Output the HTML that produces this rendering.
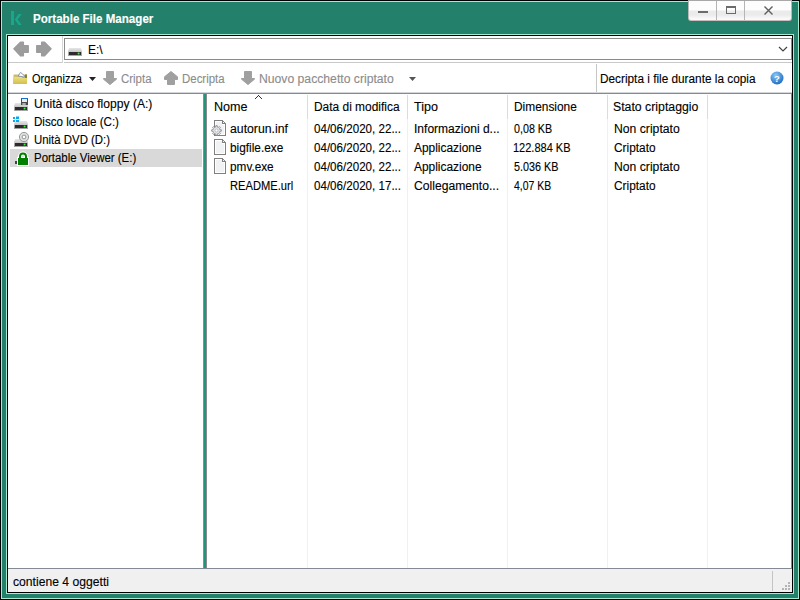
<!DOCTYPE html>
<html><head><meta charset="utf-8">
<style>
*{margin:0;padding:0;box-sizing:border-box}
html,body{width:800px;height:600px;overflow:hidden;background:#000}
body{position:relative;font-family:"Liberation Sans",sans-serif;font-size:12px;color:#000}
.a{position:absolute}
.t{position:absolute;transform-origin:0 0;white-space:pre;line-height:14px;font-size:12px;-webkit-text-stroke:0.12px currentColor}
.g{color:#8c8c8c}
</style></head><body>

<svg width="0" height="0" style="position:absolute">
<defs>
<linearGradient id="dtop" x1="0" y1="0" x2="0" y2="1"><stop offset="0" stop-color="#e6e6e6"/><stop offset="1" stop-color="#c2c2c2"/></linearGradient>


</defs></svg>
<!-- outer frame -->
<div class="a" style="left:1px;top:1px;width:798px;height:598px;background:#a5ead3"></div>
<div class="a" style="left:2px;top:2px;width:796px;height:596px;background:#23806b"></div>
<!-- K logo -->
<svg class="a" style="left:8px;top:8px" width="18" height="20" viewBox="0 0 18 20">
<rect x="3" y="3" width="3" height="14" fill="#17a88b"/>
<path d="M10.5 6H13.8L9.6 11.4L13.8 17H10.5L6.8 11.4Z" fill="#17a88b"/>
</svg>
<div class="t" style="left:33px;top:12px;color:#fff;font-weight:bold;font-size:12px;transform:scaleX(0.965)">Portable File Manager</div>
<!-- caption buttons -->
<div class="a" style="left:688px;top:0;width:104px;height:21px;background:linear-gradient(#fdfdfd 0,#fdfdfd 9px,#ebebeb 10px,#ebebeb 14px,#fafafa 18px);border:1px solid #b8b8b8;border-top-color:#a8a8a8;border-bottom-color:#c9bebe;border-radius:0 0 3px 3px"></div>
<div class="a" style="left:716px;top:1px;width:1px;height:19px;background:#b5b5b5"></div>
<div class="a" style="left:744px;top:1px;width:1px;height:19px;background:#b5b5b5"></div>
<div class="a" style="left:698px;top:11px;width:10px;height:2px;background:#6b6b6b"></div>
<div class="a" style="left:726px;top:6px;width:10px;height:8px;border:1px solid #6b6b6b;border-top-width:2px"></div>
<svg class="a" style="left:763px;top:6px" width="11" height="9" viewBox="0 0 11 9"><path d="M1.5 0.5L9.5 8.5M9.5 0.5L1.5 8.5" stroke="#5e5e5e" stroke-width="1.4"/></svg>

<!-- inner window -->
<div class="a" style="left:6px;top:34px;width:788px;height:560px;background:#a5ead3"></div>
<div class="a" style="left:7px;top:35px;width:786px;height:558px;background:#000"></div>
<div class="a" style="left:8px;top:36px;width:784px;height:556px;background:#fff"></div>

<!-- nav arrows -->
<svg class="a" style="left:13px;top:41px" width="40" height="16" viewBox="0 0 40 16">
<path d="M1 7.8L7.5 1.2H10.3V4.7H15.2V11.3H10.3V14.8H7.5Z" fill="#9c9c9c" stroke="#9c9c9c" stroke-width="1.5" stroke-linejoin="round"/>
<path d="M38 7.8L31.5 1.2H28.7V4.7H23.8V11.3H28.7V14.8H31.5Z" fill="#9c9c9c" stroke="#9c9c9c" stroke-width="1.5" stroke-linejoin="round"/>
</svg>
<div class="a" style="left:8px;top:62px;width:54px;height:1px;background:#c8c8c8"></div>
<div class="a" style="left:62px;top:36px;width:1px;height:27px;background:#d6d6d6"></div>
<!-- address box -->
<div class="a" style="left:64px;top:38px;width:728px;height:22px;border:1px solid #8a8a8a"></div>
<div class="a" style="left:64px;top:62px;width:728px;height:1px;background:#c8c8c8"></div>
<svg class="a" style="left:68px;top:48px" width="14" height="8" viewBox="0 0 14 8"><g>
<path d="M1.2 0H12.8L14 3V4.5H0V3Z" fill="url(#dtop)"/>
<rect x="0" y="4" width="14" height="4" rx="0.5" fill="#a4a4a4"/>
<rect x="1" y="4" width="12" height="3" fill="#2c2c2c"/>
<rect x="9.7" y="4.6" width="1.8" height="1.8" fill="#40f040"/>
</g></svg>
<div class="t" style="left:88px;top:43px;transform:scaleX(1.0000)">E:\</div>
<svg class="a" style="left:778px;top:46px" width="10" height="7" viewBox="0 0 10 7"><path d="M1 1L5 5L9 1" stroke="#444" stroke-width="1.2" fill="none"/></svg>

<!-- toolbar -->
<svg class="a" style="left:13px;top:71px" width="15" height="14" viewBox="0 0 15 14">
<defs><linearGradient id="fy" x1="0" y1="0" x2="0" y2="1"><stop offset="0" stop-color="#ece07a"/><stop offset="1" stop-color="#d2be4e"/></linearGradient></defs>
<path d="M0.5 3.5H14V9H0.5Z" fill="#cbbd70"/>
<path d="M12 3.5H14V7H12Z" fill="#8d7e2a"/>
<path d="M5.2 5L7.5 1.3L12 5.3L11 6Z" fill="#fff" stroke="#7e8fae" stroke-width="0.9"/>
<path d="M0 6H8.5L9.5 7H14V12.3Q14 13 13.3 13H0.7Q0 13 0 12.3Z" fill="url(#fy)"/>
</svg>
<div class="t" style="left:32px;top:72px;transform:scaleX(0.9136)">Organizza</div>
<svg class="a" style="left:89px;top:77px" width="7" height="4" viewBox="0 0 7 4"><path d="M0 0H7L3.5 4Z" fill="#222"/></svg>

<svg class="a" style="left:103px;top:71px" width="14" height="14" viewBox="0 0 14 14"><path d="M3.5 0.5H10.5V7.5H13.5V8.2L7 13.6L0.5 8.2V7.5H3.5Z" fill="#a0a0a0" stroke="#a0a0a0" stroke-linejoin="round"/></svg>
<div class="t g" style="left:121px;top:72px;transform:scaleX(0.9536)">Cripta</div>
<svg class="a" style="left:164px;top:71px" width="14" height="14" viewBox="0 0 14 14"><path d="M7 0.5L13.5 5.8V8.5H10.5V13.5H3.5V8.5H0.5V5.8Z" fill="#a0a0a0" stroke="#a0a0a0" stroke-linejoin="round"/></svg>
<div class="t g" style="left:182px;top:72px;transform:scaleX(0.9545)">Decripta</div>
<svg class="a" style="left:241px;top:71px" width="14" height="14" viewBox="0 0 14 14"><path d="M3.5 0.5H10.5V7.5H13.5V8.2L7 13.6L0.5 8.2V7.5H3.5Z" fill="#a0a0a0" stroke="#a0a0a0" stroke-linejoin="round"/></svg>
<div class="t g" style="left:259px;top:72px;transform:scaleX(1.0152)">Nuovo pacchetto criptato</div>
<svg class="a" style="left:409px;top:77px" width="7" height="4" viewBox="0 0 7 4"><path d="M0 0H7L3.5 4Z" fill="#555"/></svg>

<div class="a" style="left:596px;top:64px;width:1px;height:29px;background:#c6c6c6"></div>
<div class="t" style="left:600px;top:72px;transform:scaleX(0.9835)">Decripta i file durante la copia</div>
<svg class="a" style="left:770px;top:70.5px" width="14" height="14" viewBox="0 0 14 14">
<defs><radialGradient id="hg" cx="0.4" cy="0.3" r="0.7"><stop offset="0" stop-color="#8cc8f4"/><stop offset="1" stop-color="#1f6fc6"/></radialGradient></defs>
<circle cx="7" cy="7" r="6.5" fill="url(#hg)"/>
<text x="7" y="10.6" font-family="Liberation Sans" font-size="9.5" font-weight="bold" fill="#fff" text-anchor="middle">?</text>
</svg>
<div class="a" style="left:8px;top:92px;width:784px;height:1px;background:#d4d7dc"></div>
<div class="a" style="left:8px;top:93px;width:784px;height:1px;background:#838a94"></div>

<!-- tree panel -->
<div class="a" style="left:203px;top:94px;width:1px;height:474px;background:#8a8a92"></div>
<div class="a" style="left:204px;top:94px;width:2px;height:474px;background:#20967a"></div>
<div class="a" style="left:206px;top:94px;width:1px;height:474px;background:#8a8a92"></div>
<div class="a" style="left:10px;top:149px;width:192px;height:18px;background:#d9d9d9"></div>


<svg class="a" style="left:14px;top:103px" width="14" height="8" viewBox="0 0 14 8"><g>
<path d="M1.2 0H12.8L14 3V4.5H0V3Z" fill="url(#dtop)"/>
<rect x="0" y="4" width="14" height="4" rx="0.5" fill="#a4a4a4"/>
<rect x="1" y="4" width="12" height="3" fill="#2c2c2c"/>
<rect x="9.7" y="4.6" width="1.8" height="1.8" fill="#40f040"/>
</g></svg>
<svg class="a" style="left:21px;top:98px" width="7" height="7" viewBox="0 0 7 7">
<rect x="0" y="0" width="7" height="7" fill="#4a4a4a"/><rect x="0" y="0" width="7" height="1" fill="#1a6fd0"/>
<rect x="1" y="1" width="5" height="3" fill="#ececec"/><rect x="1.5" y="5" width="3" height="2" fill="#d8d8d8"/><rect x="2.5" y="5.5" width="1" height="1" fill="#333"/>
</svg>
<svg class="a" style="left:14px;top:121px" width="14" height="8" viewBox="0 0 14 8"><g>
<path d="M1.2 0H12.8L14 3V4.5H0V3Z" fill="url(#dtop)"/>
<rect x="0" y="4" width="14" height="4" rx="0.5" fill="#a4a4a4"/>
<rect x="1" y="4" width="12" height="3" fill="#2c2c2c"/>
<rect x="9.7" y="4.6" width="1.8" height="1.8" fill="#40f040"/>
</g></svg>
<svg class="a" style="left:13px;top:116px" width="6" height="6" viewBox="0 0 6 6">
<rect x="0" y="1" width="2" height="2" fill="#08a8ee"/><rect x="3" y="0.5" width="3" height="2.5" fill="#08a8ee"/>
<rect x="0" y="4" width="2" height="2" fill="#08a8ee"/><rect x="3" y="4" width="3" height="2.5" fill="#08a8ee"/>
</svg>
<svg class="a" style="left:14px;top:139px" width="14" height="8" viewBox="0 0 14 8"><g>
<path d="M1.2 0H12.8L14 3V4.5H0V3Z" fill="url(#dtop)"/>
<rect x="0" y="4" width="14" height="4" rx="0.5" fill="#a4a4a4"/>
<rect x="1" y="4" width="12" height="3" fill="#2c2c2c"/>
<rect x="9.7" y="4.6" width="1.8" height="1.8" fill="#40f040"/>
</g></svg>
<svg class="a" style="left:18px;top:131px" width="12" height="12" viewBox="0 0 12 12">
<circle cx="6" cy="6" r="4.6" fill="#dde1e1" stroke="#8e8e8e" stroke-width="0.9"/>
<circle cx="6" cy="6" r="1.9" fill="#fff" stroke="#8a8a8a" stroke-width="0.9"/>
</svg>
<svg class="a" style="left:14px;top:151px" width="16" height="15" viewBox="0 0 16 15">
<rect x="1" y="10" width="2" height="3" fill="#444"/>
<path d="M6 8V5.5A3 3 0 0 1 12 5.5V8" stroke="#fff" stroke-width="4" fill="none"/>
<rect x="3" y="6" width="12" height="9" fill="#fff"/>
<path d="M6 8V5.5A3 3 0 0 1 12 5.5V8" stroke="#008000" stroke-width="2" fill="none"/>
<rect x="4" y="7" width="10" height="7" fill="#008000"/>
</svg>
<div class="t" style="left:34px;top:97px;transform:scaleX(1.0086)">Unità disco floppy (A:)</div>
<div class="t" style="left:34px;top:115px;transform:scaleX(0.9655)">Disco locale (C:)</div>
<div class="t" style="left:34px;top:133px;transform:scaleX(0.9506)">Unità DVD (D:)</div>
<div class="t" style="left:34px;top:151px;transform:scaleX(0.9538)">Portable Viewer (E:)</div>

<!-- list header -->
<div class="t" style="left:214px;top:100px;transform:scaleX(1.0484)">Nome</div>
<div class="t" style="left:314px;top:100px;transform:scaleX(0.9942)">Data di modifica</div>
<div class="t" style="left:414px;top:100px;transform:scaleX(1.0435)">Tipo</div>
<div class="t" style="left:514px;top:100px;transform:scaleX(0.9921)">Dimensione</div>
<div class="t" style="left:613px;top:100px;transform:scaleX(1.0244)">Stato criptaggio</div>
<svg class="a" style="left:255px;top:95px" width="7" height="4" viewBox="0 0 7 4" shape-rendering="crispEdges">
<rect x="3" y="0" width="1" height="1" fill="#333"/><rect x="2" y="1" width="1" height="1" fill="#333"/><rect x="4" y="1" width="1" height="1" fill="#333"/>
<rect x="1" y="2" width="1" height="1" fill="#333"/><rect x="5" y="2" width="1" height="1" fill="#333"/><rect x="0" y="3" width="1" height="1" fill="#333"/><rect x="6" y="3" width="1" height="1" fill="#333"/></svg>

<div class="a" style="left:307px;top:95px;width:1px;height:24px;background:#dcdcdc"></div>
<div class="a" style="left:407px;top:95px;width:1px;height:24px;background:#dcdcdc"></div>
<div class="a" style="left:507px;top:95px;width:1px;height:24px;background:#dcdcdc"></div>
<div class="a" style="left:607px;top:95px;width:1px;height:24px;background:#dcdcdc"></div>
<div class="a" style="left:707px;top:95px;width:1px;height:24px;background:#dcdcdc"></div>
<div class="a" style="left:307px;top:119px;width:1px;height:449px;background:#e9f1fe"></div>
<div class="a" style="left:407px;top:119px;width:1px;height:449px;background:#e9f1fe"></div>
<div class="a" style="left:507px;top:119px;width:1px;height:449px;background:#e9f1fe"></div>
<div class="a" style="left:607px;top:119px;width:1px;height:449px;background:#e9f1fe"></div>
<div class="a" style="left:707px;top:119px;width:1px;height:449px;background:#e9f1fe"></div>
<div class="a" style="left:791px;top:93px;width:1px;height:475px;background:#838a94"></div>

<!-- rows -->
<svg class="a" style="left:214px;top:120px" width="12" height="16" viewBox="0 0 12 16"><g>
<path d="M0 0H9V1H1V15H11V4H12V16H0Z" fill="#808080"/>
<rect x="1" y="1" width="8" height="14" fill="#fff"/><rect x="9" y="4" width="2" height="11" fill="#fff"/>
<rect x="2" y="2" width="6" height="12" fill="#f1f2f4"/>
<rect x="2" y="5" width="8" height="9" fill="#f1f2f4"/>
<path d="M8 0H9V3H11V4H8Z" fill="#808080"/>
<rect x="9" y="1" width="1" height="1" fill="#8a8a8a"/><rect x="10" y="2" width="1" height="1" fill="#8a8a8a"/><rect x="11" y="3" width="1" height="1" fill="#8a8a8a"/>
<rect x="9" y="2" width="1" height="1" fill="#f4f4f4"/>
</g></svg>
<svg class="a" style="left:211px;top:125px" width="12" height="12" viewBox="0 0 12 12">
<path d="M10.35 4.81 L10.35 6.19 L8.89 6.37 L8.51 7.28 L9.42 8.44 L8.44 9.42 L7.28 8.51 L6.37 8.89 L6.19 10.35 L4.81 10.35 L4.63 8.89 L3.72 8.51 L2.56 9.42 L1.58 8.44 L2.49 7.28 L2.11 6.37 L0.65 6.19 L0.65 4.81 L2.11 4.63 L2.49 3.72 L1.58 2.56 L2.56 1.58 L3.72 2.49 L4.63 2.11 L4.81 0.65 L6.19 0.65 L6.37 2.11 L7.28 2.49 L8.44 1.58 L9.42 2.56 L8.51 3.72 L8.89 4.63Z" fill="#e2e5e9" stroke="#8c8c8c" stroke-width="0.9" stroke-linejoin="round"/>
<circle cx="5.5" cy="5.5" r="1.5" fill="#fff" stroke="#a0a0a0" stroke-width="0.6"/>
</svg>
<svg class="a" style="left:214px;top:139px" width="12" height="16" viewBox="0 0 12 16"><g>
<path d="M0 0H9V1H1V15H11V4H12V16H0Z" fill="#808080"/>
<rect x="1" y="1" width="8" height="14" fill="#fff"/><rect x="9" y="4" width="2" height="11" fill="#fff"/>
<rect x="2" y="2" width="6" height="12" fill="#f1f2f4"/>
<rect x="2" y="5" width="8" height="9" fill="#f1f2f4"/>
<path d="M8 0H9V3H11V4H8Z" fill="#808080"/>
<rect x="9" y="1" width="1" height="1" fill="#8a8a8a"/><rect x="10" y="2" width="1" height="1" fill="#8a8a8a"/><rect x="11" y="3" width="1" height="1" fill="#8a8a8a"/>
<rect x="9" y="2" width="1" height="1" fill="#f4f4f4"/>
</g></svg>
<svg class="a" style="left:214px;top:158px" width="12" height="16" viewBox="0 0 12 16"><g>
<path d="M0 0H9V1H1V15H11V4H12V16H0Z" fill="#808080"/>
<rect x="1" y="1" width="8" height="14" fill="#fff"/><rect x="9" y="4" width="2" height="11" fill="#fff"/>
<rect x="2" y="2" width="6" height="12" fill="#f1f2f4"/>
<rect x="2" y="5" width="8" height="9" fill="#f1f2f4"/>
<path d="M8 0H9V3H11V4H8Z" fill="#808080"/>
<rect x="9" y="1" width="1" height="1" fill="#8a8a8a"/><rect x="10" y="2" width="1" height="1" fill="#8a8a8a"/><rect x="11" y="3" width="1" height="1" fill="#8a8a8a"/>
<rect x="9" y="2" width="1" height="1" fill="#f4f4f4"/>
</g></svg>

<div class="t" style="left:230px;top:122px;transform:scaleX(1.0211)">autorun.inf</div>
<div class="t" style="left:314px;top:122px;transform:scaleX(0.9663)">04/06/2020, 22...</div>
<div class="t" style="left:414px;top:122px;transform:scaleX(1.003)">Informazioni d...</div>
<div class="t" style="left:514px;top:122px;transform:scaleX(0.8929)">0,08 KB</div>
<div class="t" style="left:614px;top:122px;transform:scaleX(1.0156)">Non criptato</div>

<div class="t" style="left:230px;top:141px;transform:scaleX(0.9849)">bigfile.exe</div>
<div class="t" style="left:314px;top:141px;transform:scaleX(0.9663)">04/06/2020, 22...</div>
<div class="t" style="left:414px;top:141px;transform:scaleX(0.9926)">Applicazione</div>
<div class="t" style="left:513px;top:141px;transform:scaleX(0.9177)">122.884 KB</div>
<div class="t" style="left:614px;top:141px;transform:scaleX(0.9881)">Criptato</div>

<div class="t" style="left:230px;top:160px;transform:scaleX(0.9824)">pmv.exe</div>
<div class="t" style="left:314px;top:160px;transform:scaleX(0.9663)">04/06/2020, 22...</div>
<div class="t" style="left:414px;top:160px;transform:scaleX(0.9926)">Applicazione</div>
<div class="t" style="left:514px;top:160px;transform:scaleX(0.8980)">5.036 KB</div>
<div class="t" style="left:614px;top:160px;transform:scaleX(1.0156)">Non criptato</div>

<div class="t" style="left:230px;top:179px;transform:scaleX(0.9284)">README.url</div>
<div class="t" style="left:314px;top:179px;transform:scaleX(0.9663)">04/06/2020, 17...</div>
<div class="t" style="left:414px;top:179px;transform:scaleX(1.0120)">Collegamento...</div>
<div class="t" style="left:514px;top:179px;transform:scaleX(0.869)">4,07 KB</div>
<div class="t" style="left:614px;top:179px;transform:scaleX(0.9881)">Criptato</div>

<!-- status bar -->
<div class="a" style="left:8px;top:568px;width:784px;height:1px;background:#838a94"></div>
<div class="a" style="left:8px;top:569px;width:784px;height:23px;background:#f0f0f0"></div>
<div class="a" style="left:772px;top:571px;width:1px;height:20px;background:#c4c4c4"></div>
<div class="t" style="left:13px;top:575px;transform:scaleX(1.0128)">contiene 4 oggetti</div>
<svg class="a" style="left:782px;top:582px" width="9" height="9" viewBox="0 0 9 9" shape-rendering="crispEdges">
<g fill="#b4b4b4"><rect x="6" y="0" width="2" height="2"/><rect x="3" y="3" width="2" height="2"/><rect x="6" y="3" width="2" height="2"/><rect x="0" y="6" width="2" height="2"/><rect x="3" y="6" width="2" height="2"/><rect x="6" y="6" width="2" height="2"/></g></svg>
</body></html>
